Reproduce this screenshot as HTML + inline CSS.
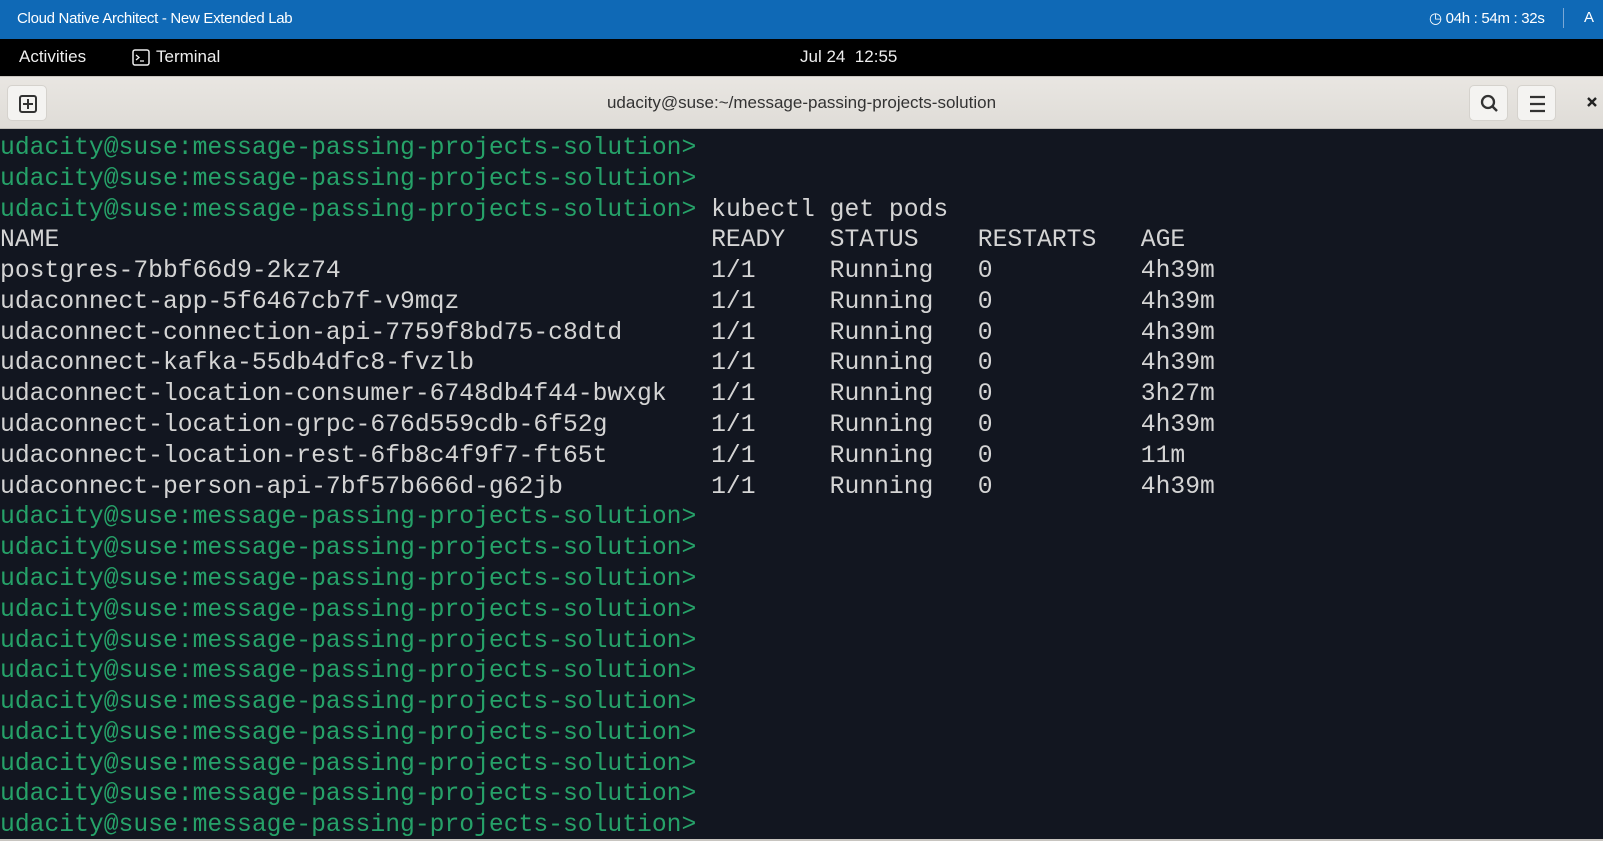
<!DOCTYPE html>
<html><head><meta charset="utf-8"><style>
*{margin:0;padding:0;box-sizing:border-box}
body{width:1603px;height:841px;overflow:hidden;background:#121620;font-family:"Liberation Sans",sans-serif;position:relative}
#top{position:absolute;left:0;top:0;width:1603px;height:39px;background:#0f69b6;color:#fff;font-size:15px}
#top .t{position:absolute;left:17px;top:10px;letter-spacing:-0.3px}
#top .r{position:absolute;left:1429px;top:9px;letter-spacing:-0.3px}
#top .sep{position:absolute;left:1563px;top:8px;width:1px;height:20px;background:#7aa8d6}
#top .a{position:absolute;left:1584px;top:9px}
#bar{position:absolute;left:0;top:39px;width:1603px;height:38px;background:#000;color:#eee;font-size:17px}
#bar .i{position:absolute;top:8px}
#hdr{position:absolute;left:0;top:76px;width:1603px;height:53px;background:linear-gradient(#e9e6e2,#dfdcd7);border-top:1px solid #c8c5c0;border-bottom:1px solid #c0bdb8}
.btn{position:absolute;top:8px;width:39px;height:36px;background:#f4f3f1;border:1px solid #d5d2cd;border-radius:5px}
#title{position:absolute;left:0;width:1603px;text-align:center;top:16px;font-size:17px;color:#333}
#term{position:absolute;left:0;top:133px;font-family:"Liberation Mono",monospace;font-size:24.7px;line-height:30.78px;color:#d4d4d4;white-space:pre}
.g{color:#26a269}
</style></head><body>
<div id="top"><span class="t">Cloud Native Architect - New Extended Lab</span><span class="r">&#9719; 04h : 54m : 32s</span><div class="sep"></div><span class="a">A</span></div>
<div id="bar"><span class="i" style="left:19px">Activities</span>
<svg class="i" style="left:132px;top:10px" width="18" height="17" viewBox="0 0 18 17"><rect x="1" y="1" width="16" height="15" rx="2" fill="none" stroke="#eee" stroke-width="1.5"/><path d="M4 6l3 2.5-3 2.5M8 12h4" stroke="#eee" stroke-width="1.3" fill="none"/></svg>
<span class="i" style="left:156px">Terminal</span><span class="i" style="left:800px">Jul 24&nbsp; 12:55</span></div>
<div id="hdr">
<div class="btn" style="left:7px;width:40px"><svg width="40" height="36" viewBox="0 0 40 36"><rect x="12" y="10" width="16" height="16" rx="2" fill="none" stroke="#333" stroke-width="2"/><path d="M20 13v10M15 18h10" stroke="#333" stroke-width="2"/></svg></div>
<div id="title">udacity@suse:~/message-passing-projects-solution</div>
<div class="btn" style="left:1469px"><svg width="39" height="36" viewBox="0 0 39 36"><circle cx="18" cy="16" r="6" fill="none" stroke="#333" stroke-width="2.3"/><path d="M22 20l5 5" stroke="#333" stroke-width="2.5"/></svg></div>
<div class="btn" style="left:1517px"><svg width="39" height="36" viewBox="0 0 39 36"><path d="M12 11h15M12 18h15M12 25h15" stroke="#333" stroke-width="2.3"/></svg></div>
<svg style="position:absolute;left:1585px;top:18px" width="14" height="14" viewBox="0 0 14 14"><path d="M3 3l8 8M11 3l-8 8" stroke="#222" stroke-width="2.4"/></svg>
</div>
<div id="term"><span class="g">udacity@suse:message-passing-projects-solution&gt;</span>
<span class="g">udacity@suse:message-passing-projects-solution&gt;</span>
<span class="g">udacity@suse:message-passing-projects-solution&gt;</span> kubectl get pods
NAME                                            READY   STATUS    RESTARTS   AGE
postgres-7bbf66d9-2kz74                         1/1     Running   0          4h39m
udaconnect-app-5f6467cb7f-v9mqz                 1/1     Running   0          4h39m
udaconnect-connection-api-7759f8bd75-c8dtd      1/1     Running   0          4h39m
udaconnect-kafka-55db4dfc8-fvzlb                1/1     Running   0          4h39m
udaconnect-location-consumer-6748db4f44-bwxgk   1/1     Running   0          3h27m
udaconnect-location-grpc-676d559cdb-6f52g       1/1     Running   0          4h39m
udaconnect-location-rest-6fb8c4f9f7-ft65t       1/1     Running   0          11m
udaconnect-person-api-7bf57b666d-g62jb          1/1     Running   0          4h39m
<span class="g">udacity@suse:message-passing-projects-solution&gt;</span>
<span class="g">udacity@suse:message-passing-projects-solution&gt;</span>
<span class="g">udacity@suse:message-passing-projects-solution&gt;</span>
<span class="g">udacity@suse:message-passing-projects-solution&gt;</span>
<span class="g">udacity@suse:message-passing-projects-solution&gt;</span>
<span class="g">udacity@suse:message-passing-projects-solution&gt;</span>
<span class="g">udacity@suse:message-passing-projects-solution&gt;</span>
<span class="g">udacity@suse:message-passing-projects-solution&gt;</span>
<span class="g">udacity@suse:message-passing-projects-solution&gt;</span>
<span class="g">udacity@suse:message-passing-projects-solution&gt;</span>
<span class="g">udacity@suse:message-passing-projects-solution&gt;</span></div>
<div style="position:absolute;left:0;top:839px;width:1603px;height:2px;background:#c8c5c0"></div>
</body></html>
